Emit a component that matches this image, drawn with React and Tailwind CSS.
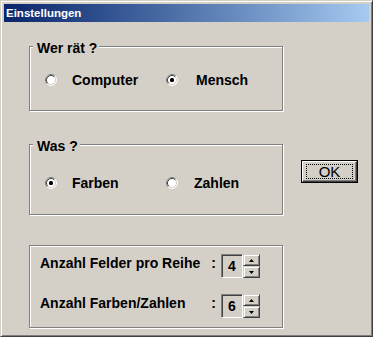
import React from 'react';

const face = 'bg-[#d4d0c8]';

const Radio = ({ checked }) => (
  <svg width="12" height="12" viewBox="0 0 12 12" className="shrink-0">
    <circle cx="6" cy="6" r="5" fill="#fff" />
    <path d="M2.11 9.89A5.5 5.5 0 0 1 9.89 2.11" stroke="#808080" fill="none" />
    <path d="M9.89 2.11A5.5 5.5 0 0 1 2.11 9.89" stroke="#fff" fill="none" />
    <path d="M2.82 9.18A4.5 4.5 0 0 1 9.18 2.82" stroke="#404040" fill="none" />
    <path d="M9.18 2.82A4.5 4.5 0 0 1 2.82 9.18" stroke="#d4d0c8" fill="none" />
    {checked && <rect x="4" y="4" width="4" height="4" rx="1.5" fill="#000" />}
  </svg>
);

const Group = ({ title, className, children }) => (
  <div
    className={`relative w-[254px] border border-[#808080] shadow-[inset_1px_1px_0_#fff,1px_1px_0_#fff] ${className}`}
  >
    {title && (
      <span className={`absolute top-[-7px] left-[3px] pl-[4px] pr-[2px] leading-[16px] ${face}`}>
        {title}
      </span>
    )}
    {children}
  </div>
);

const Option = ({ label, checked, gap, width }) => (
  <div className={`flex items-center ${width}`}>
    <Radio checked={checked} />
    <span className={`${gap} leading-[16px]`}>{label}</span>
  </div>
);

const Arrow = ({ up }) => (
  <svg width="5" height="3" viewBox="0 0 5 3">
    <path d={up ? 'M2.5 0L5 3H0z' : 'M0 0h5L2.5 3z'} fill="#000" />
  </svg>
);

const SpinButton = ({ up }) => (
  <div className="flex h-[12px] w-[17px] items-center justify-center border-t border-l border-t-[#d4d0c8] border-l-[#d4d0c8] border-b border-r border-b-[#404040] border-r-[#404040] shadow-[inset_1px_1px_0_#fff,inset_-1px_-1px_0_#808080]">
    <Arrow up={up} />
  </div>
);

const Spinner = ({ value }) => (
  <div className="flex">
    <div className="flex h-[24px] w-[22px] items-center justify-center border border-t-[#808080] border-l-[#808080] border-b-white border-r-white shadow-[inset_1px_1px_0_#404040,inset_-1px_-1px_0_#d4d0c8]">
      {value}
    </div>
    <div className="flex flex-col">
      <SpinButton up />
      <SpinButton />
    </div>
  </div>
);

const Row = ({ label, value, className }) => (
  <div className={`flex items-start ${className}`}>
    <div className="mt-[1px] flex w-[181px] justify-between pr-[5px] leading-[16px]">
      <span>{label}</span>
      <span>:</span>
    </div>
    <Spinner value={value} />
  </div>
);

export default function App() {
  return (
    <div
      className={`flex h-[337px] w-[373px] flex-col border border-t-[#d4d0c8] border-l-[#d4d0c8] border-b-[#404040] border-r-[#404040] p-[3px] shadow-[inset_1px_1px_0_#fff,inset_-1px_-1px_0_#808080] ${face} font-['Liberation_Sans',Arial,sans-serif] text-[14px] font-bold text-black`}
    >
      <div className="flex h-[18px] items-center bg-gradient-to-r from-[#0a246a] to-[#a6caf0] pl-[2px] text-[11.5px] leading-[18px] text-white">
        Einstellungen
      </div>

      <div className="flex pl-[25px]">
        <div className="flex flex-col">
          <Group title="Wer rät ?" className="mt-[24px] h-[65px] pt-[25px]">
            <div className="flex pl-[15px]">
              <Option label="Computer" gap="ml-[15px]" width="w-[121px]" />
              <Option label="Mensch" checked gap="ml-[18px]" />
            </div>
          </Group>

          <Group title="Was ?" className="mt-[33px] h-[71px] pt-[30px]">
            <div className="flex pl-[15px]">
              <Option label="Farben" checked gap="ml-[15px]" width="w-[121px]" />
              <Option label="Zahlen" gap="ml-[16px]" />
            </div>
          </Group>

          <Group className="mt-[30px] h-[83px] pt-[8px] pl-[10px]">
            <Row label="Anzahl Felder pro Reihe" value="4" />
            <Row label="Anzahl Farben/Zahlen" value="6" className="mt-[16px]" />
          </Group>
        </div>

        <div className="ml-[18px] mt-[138px]">
          <button className="h-[23px] w-[57px] border border-black p-0">
            <div className="flex h-full w-full items-center justify-center border-t border-l border-t-white border-l-white border-b border-r border-b-[#404040] border-r-[#404040] shadow-[inset_-1px_-1px_0_#808080]">
              <div className="flex h-[15px] w-[47px] items-center justify-center border border-dotted border-black text-[15px] font-normal leading-none">
                OK
              </div>
            </div>
          </button>
        </div>
      </div>
    </div>
  );
}
